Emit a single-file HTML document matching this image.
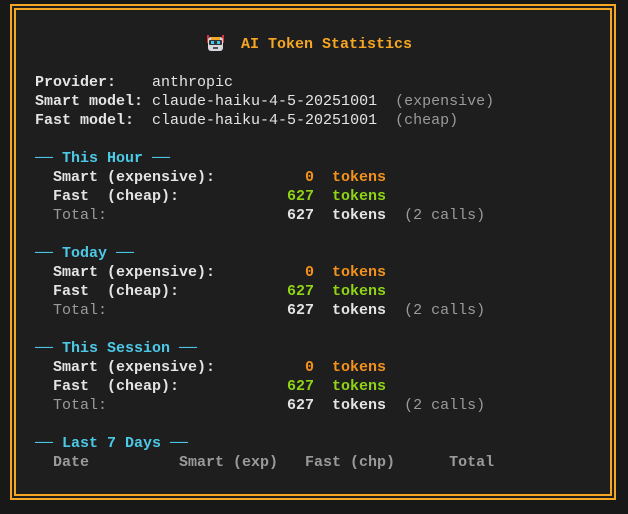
<!DOCTYPE html>
<html><head><meta charset="utf-8"><style>
html,body{margin:0;padding:0;background:#181818;width:628px;height:514px;overflow:hidden}
.o{position:absolute;left:10px;top:4px;width:606px;height:496px;border:2px solid #f5a623;box-sizing:border-box;background:#1e1e1e}
.i{position:absolute;left:14px;top:8px;box-sizing:border-box;border:2px solid #f5a623;width:598px;height:488px}
pre{position:absolute;left:35px;top:35px;margin:0;font-family:"Liberation Mono",monospace;font-size:15px;line-height:19px;color:#e4e4e4;font-weight:bold}
.t{color:#f5a623}.c{color:#4cc9e6}.g{color:#9a9a9a;font-weight:normal}.gb{color:#9a9a9a}.or{color:#f3921c}.gr{color:#8fd415}.w{color:#e4e4e4}
.rb{display:inline-block;width:17px;height:16px;vertical-align:-3px;position:relative;left:1px}
</style></head><body>
<div class="o"></div><div class="i"></div>
<pre><span class="t">                   <svg class="rb" viewBox="0 0 17 16"><rect x="0" y="0" width="2" height="8" fill="#e0303a"/><rect x="15" y="0" width="2" height="8" fill="#e0303a"/><rect x="1" y="2" width="15" height="14" rx="3" fill="#d8d8dc"/><rect x="4" y="2" width="9" height="3" fill="#f5a623"/><rect x="2" y="5" width="13" height="5" rx="1" fill="#333"/><rect x="4" y="6" width="3" height="3" fill="#3cc8f0"/><rect x="10" y="6" width="3" height="3" fill="#3cc8f0"/><rect x="6" y="12" width="5" height="2" fill="#555"/></svg>  AI Token Statistics</span>

Provider:    <span class="w" style="font-weight:normal">anthropic</span>
Smart model: <span style="font-weight:normal">claude-haiku-4-5-20251001</span>  <span class="g">(expensive)</span>
Fast model:  <span style="font-weight:normal">claude-haiku-4-5-20251001</span>  <span class="g">(cheap)</span>

<span class="c">── This Hour ──</span>
  Smart (expensive):          <span class="or">0  tokens</span>
  Fast  (cheap):            <span class="gr">627  tokens</span>
<span class="g">  Total:</span>                    627  tokens  <span class="g">(2 calls)</span>

<span class="c">── Today ──</span>
  Smart (expensive):          <span class="or">0  tokens</span>
  Fast  (cheap):            <span class="gr">627  tokens</span>
<span class="g">  Total:</span>                    627  tokens  <span class="g">(2 calls)</span>

<span class="c">── This Session ──</span>
  Smart (expensive):          <span class="or">0  tokens</span>
  Fast  (cheap):            <span class="gr">627  tokens</span>
<span class="g">  Total:</span>                    627  tokens  <span class="g">(2 calls)</span>

<span class="c">── Last 7 Days ──</span>
<span class="gb">  Date          Smart (exp)   Fast (chp)      Total</span></pre>
</body></html>
